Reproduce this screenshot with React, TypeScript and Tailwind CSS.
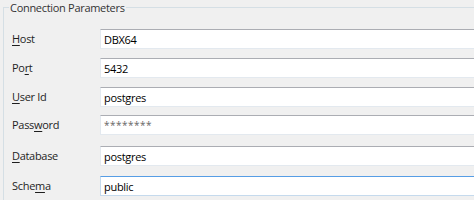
import React from "react"

type Row = {
  pre: string
  key: string
  post: string
  value: string
  mt: string
  secret?: boolean
  focused?: boolean
}

const rows: Row[] = [
  { pre: "", key: "H", post: "ost", value: "DBX64", mt: "mt-[14px]" },
  { pre: "Po", key: "r", post: "t", value: "5432", mt: "mt-[9px]" },
  { pre: "", key: "U", post: "ser Id", value: "postgres", mt: "mt-[9px]" },
  { pre: "Pass", key: "w", post: "ord", value: "********", mt: "mt-[8px]", secret: true },
  { pre: "", key: "D", post: "atabase", value: "postgres", mt: "mt-[11px]" },
  { pre: "Sche", key: "m", post: "a", value: "public", mt: "mt-[10px]", focused: true },
]

export default function App() {
  return (
    <div className="w-[474px] h-[200px] overflow-hidden bg-[#f0f0f0] text-[11px] tracking-[-0.3px] text-[#1e1e1e] font-['Segoe_UI','Open_Sans',sans-serif]">
      <fieldset className="ml-[3px] h-[220px] border-l border-t border-[#d5dfe5]">
        <legend className="ml-[5px] px-[1px] leading-[15px] text-[#333]">Connection Parameters</legend>
        {rows.map((r) => (
          <div key={r.value + r.post} className={`flex items-center ${r.mt}`}>
            <span className="w-[96px] shrink-0 pl-[8px]">
              {r.pre}
              <u className="underline-offset-2">{r.key}</u>
              {r.post}
            </span>
            <input
              readOnly
              value={r.value}
              className={
                r.focused
                  ? "h-[20px] w-[400px] shrink-0 border border-[#c5daed] border-t-[#569de5] bg-white px-[3px] text-black outline-none"
                  : r.secret
                  ? "h-[20px] w-[400px] shrink-0 border border-[#e3e9ef] border-t-[#abadb3] bg-white px-[3px] text-[10px] tracking-[0.5px] text-[#666] outline-none"
                  : "h-[20px] w-[400px] shrink-0 border border-[#e3e9ef] border-t-[#abadb3] bg-white px-[3px] text-black outline-none"
              }
            />
          </div>
        ))}
      </fieldset>
    </div>
  )
}
